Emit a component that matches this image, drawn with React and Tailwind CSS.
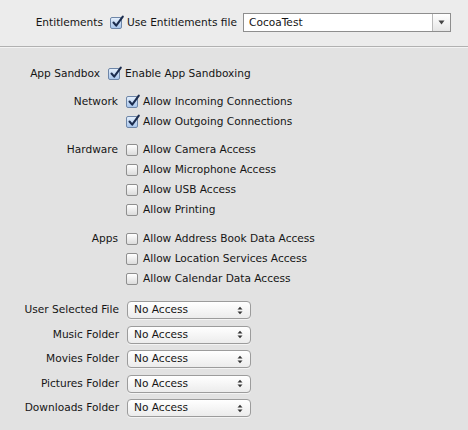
import React from 'react';

const font = { fontFamily: '"DejaVu Sans", "Liberation Sans", sans-serif' };

function Check({ checked }) {
  if (checked) {
    return (
      <span className="relative inline-block h-[12px] w-[12px] shrink-0 rounded-[2px] border border-[#6e86a8] bg-gradient-to-b from-[#e3eefb] to-[#a9c6ec]">
        <svg className="absolute -top-[3px] left-[0px]" width="14" height="14" viewBox="0 0 14 14">
          <path d="M2.5 7.5 L5.2 10.6 L11.8 1.6" fill="none" stroke="#1c2d4f" strokeWidth="2.1" strokeLinecap="round" strokeLinejoin="round" />
        </svg>
      </span>
    );
  }
  return (
    <span className="inline-block h-[12px] w-[12px] shrink-0 rounded-[2px] border border-[#8f8f8f] bg-gradient-to-b from-[#ffffff] to-[#dcdcdc]" />
  );
}

function CheckRow({ label, text, checked, labelWidth = 126 }) {
  return (
    <div className="flex h-[20px] items-center">
      <div className="shrink-0 pr-[8px] text-right" style={{ width: labelWidth }}>
        {label}
      </div>
      <Check checked={checked} />
      <span className="ml-[5px]">{text}</span>
    </div>
  );
}

function Group({ label, items }) {
  return (
    <div className="flex flex-col">
      {items.map((it, i) => (
        <CheckRow key={it.text} label={i === 0 ? label : ''} text={it.text} checked={it.checked} />
      ))}
    </div>
  );
}

function Popup({ label }) {
  return (
    <div className="flex h-[20px] items-center">
      <div className="w-[127px] shrink-0 pr-[8px] text-right">{label}</div>
      <div className="flex h-[18px] w-[124px] items-center justify-between rounded-[4px] border border-[#9c9c9c] bg-gradient-to-b from-[#ffffff] to-[#ececec] pl-[6px] pr-[7px] shadow-[0_1px_0_rgba(255,255,255,0.6)]">
        <span>No Access</span>
        <svg width="6" height="9" viewBox="0 0 6 9">
          <path d="M0.5 3.5 L3 0.8 L5.5 3.5 Z" fill="#333" />
          <path d="M0.5 5.5 L3 8.2 L5.5 5.5 Z" fill="#333" />
        </svg>
      </div>
    </div>
  );
}

export default function App() {
  return (
    <div className="h-[430px] w-[468px] overflow-hidden bg-[#e2e2e2] text-[10.6px] text-[#151515]" style={font}>
      {/* Entitlements band */}
      <div className="flex h-[47px] items-center border-b border-[#b1b1b1] bg-[#ececec] pb-[1px]">
        <div className="w-[110px] shrink-0 pr-[7px] text-right">Entitlements</div>
        <Check checked />
        <span className="ml-[5px]">Use Entitlements file</span>
        <div className="ml-[6px] flex h-[19px] w-[208px] items-center border border-[#8e8e8e] bg-white">
          <span className="flex-1 pl-[5px]">CocoaTest</span>
          <div className="flex h-full w-[18px] items-center justify-center border-l border-[#b9b9b9] bg-gradient-to-b from-[#ffffff] to-[#e6e6e6]">
            <svg width="7" height="5" viewBox="0 0 7 5">
              <path d="M0.5 0.5 L6.5 0.5 L3.5 4.5 Z" fill="#444" />
            </svg>
          </div>
        </div>
      </div>
      <div className="h-px bg-[#f3f3f3]" />

      <div className="flex flex-col pt-[16px]">
        <CheckRow label="App Sandbox" text="Enable App Sandboxing" checked labelWidth={108} />

        <div className="mt-[8px]">
          <Group
            label="Network"
            items={[
              { text: 'Allow Incoming Connections', checked: true },
              { text: 'Allow Outgoing Connections', checked: true },
            ]}
          />
        </div>

        <div className="mt-[8px]">
          <Group
            label="Hardware"
            items={[
              { text: 'Allow Camera Access' },
              { text: 'Allow Microphone Access' },
              { text: 'Allow USB Access' },
              { text: 'Allow Printing' },
            ]}
          />
        </div>

        <div className="mt-[9px]">
          <Group
            label="Apps"
            items={[
              { text: 'Allow Address Book Data Access' },
              { text: 'Allow Location Services Access' },
              { text: 'Allow Calendar Data Access' },
            ]}
          />
        </div>

        <div className="mt-[11px] flex flex-col gap-[4.5px]">
          <Popup label="User Selected File" />
          <Popup label="Music Folder" />
          <Popup label="Movies Folder" />
          <Popup label="Pictures Folder" />
          <Popup label="Downloads Folder" />
        </div>
      </div>
    </div>
  );
}
